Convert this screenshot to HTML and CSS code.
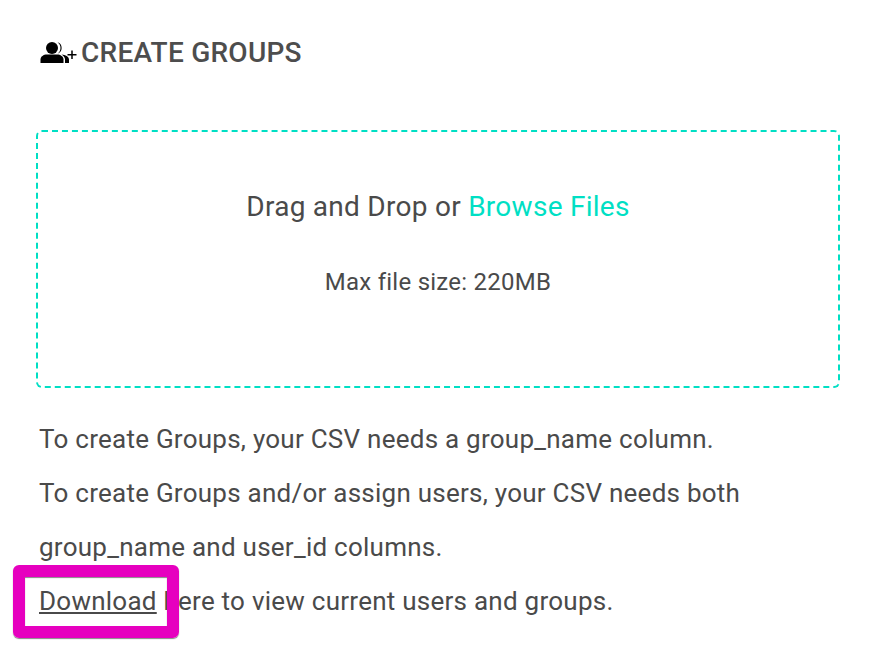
FILE: index.html
```html
<!DOCTYPE html>
<html lang="en">
<head>
    <meta charset="UTF-8">
    <title>Create Groups</title>
    <link rel="stylesheet" href="styles.css">
</head>
<body>
    <main class="page">
        <h1 class="title">
            <svg class="title-icon" viewBox="0 0 37 22" width="37" height="22">
                <circle cx="12" cy="6" r="6" fill="#000"/>
                <path d="M.5 21v-3.500c0-3 3-5 6.500-5h10c3.500 0 6.500 2 6.500 5v3.500z" fill="#000"/>
                <path d="M17.500 .3a6 6 0 0 1 0 11.400c2-1.400 3-3.500 3-5.700s-1-4.300-3-5.700z" fill="#000"/>
                <path d="M21.500 12.500c4 .2 7.500 2 7.500 5v3.500h-4v-3.500c0-2-1.500-3.700-3.500-5z" fill="#000"/>
                <path d="M32 8.500v8.500M27.500 12.800h9" stroke="#000" stroke-width="1.500" fill="none"/>
            </svg>
            <span class="title-text">CREATE GROUPS</span>
        </h1>
        <div class="dropzone">
            <p class="drop-text">Drag and Drop or <a class="browse" href="#">Browse Files</a></p>
            <p class="drop-limit">Max file size: 220MB</p>
        </div>
        <div class="notes">
            <p>To create Groups, your CSV needs a group_name column.</p>
            <p>To create Groups and/or assign users, your CSV needs both</p>
            <p>group_name and user_id columns.</p>
            <p><a class="download" href="#">Download</a> here to view current users and groups.</p>
            <div class="highlight"></div>
        </div>
    </main>
</body>
</html>
```

FILE: styles.css
```css
body {
    margin: 0;
    background-color: #fff;
    font-family: Roboto, "Liberation Sans", sans-serif;
    color: #4a4a4a;
}

.page {
    padding: 36px 38px 40px 36px;
}

.title {
    display: flex;
    align-items: center;
    gap: 4px;
    margin: 0 0 60px 4px;
    height: 34px;
    font-size: 28px;
    font-weight: 500;
    letter-spacing: 0.25px;
    color: #4d4d4d;
}

.title-icon {
    display: block;
}

.title-text {
    margin-bottom: 2px;
}

.dropzone {
    box-sizing: border-box;
    height: 258px;
    border: 2px dashed #00dfc4;
    border-radius: 6px;
    padding-top: 59px;
    text-align: center;
}

.drop-text {
    margin: 0 0 46px;
    font-size: 28px;
    line-height: 32px;
    letter-spacing: 0.27px;
}

.browse {
    color: #00dfc4;
    text-decoration: none;
}

.drop-limit {
    margin: 0;
    font-size: 24px;
    line-height: 27px;
    letter-spacing: 0.25px;
}

.notes {
    position: relative;
    margin: 24px 0 0 3px;
    font-size: 26px;
    letter-spacing: 0.25px;
}

.notes p {
    margin: 0;
    line-height: 54px;
    white-space: nowrap;
}

.download {
    color: #4a4a4a;
}

.highlight {
    position: absolute;
    left: -26px;
    top: 153px;
    width: 142px;
    height: 49px;
    border: 12px solid #e600bf;
    border-radius: 6px;
    box-shadow: 0 1px 1px #888, inset 0 1px 1px #888;
}
```
